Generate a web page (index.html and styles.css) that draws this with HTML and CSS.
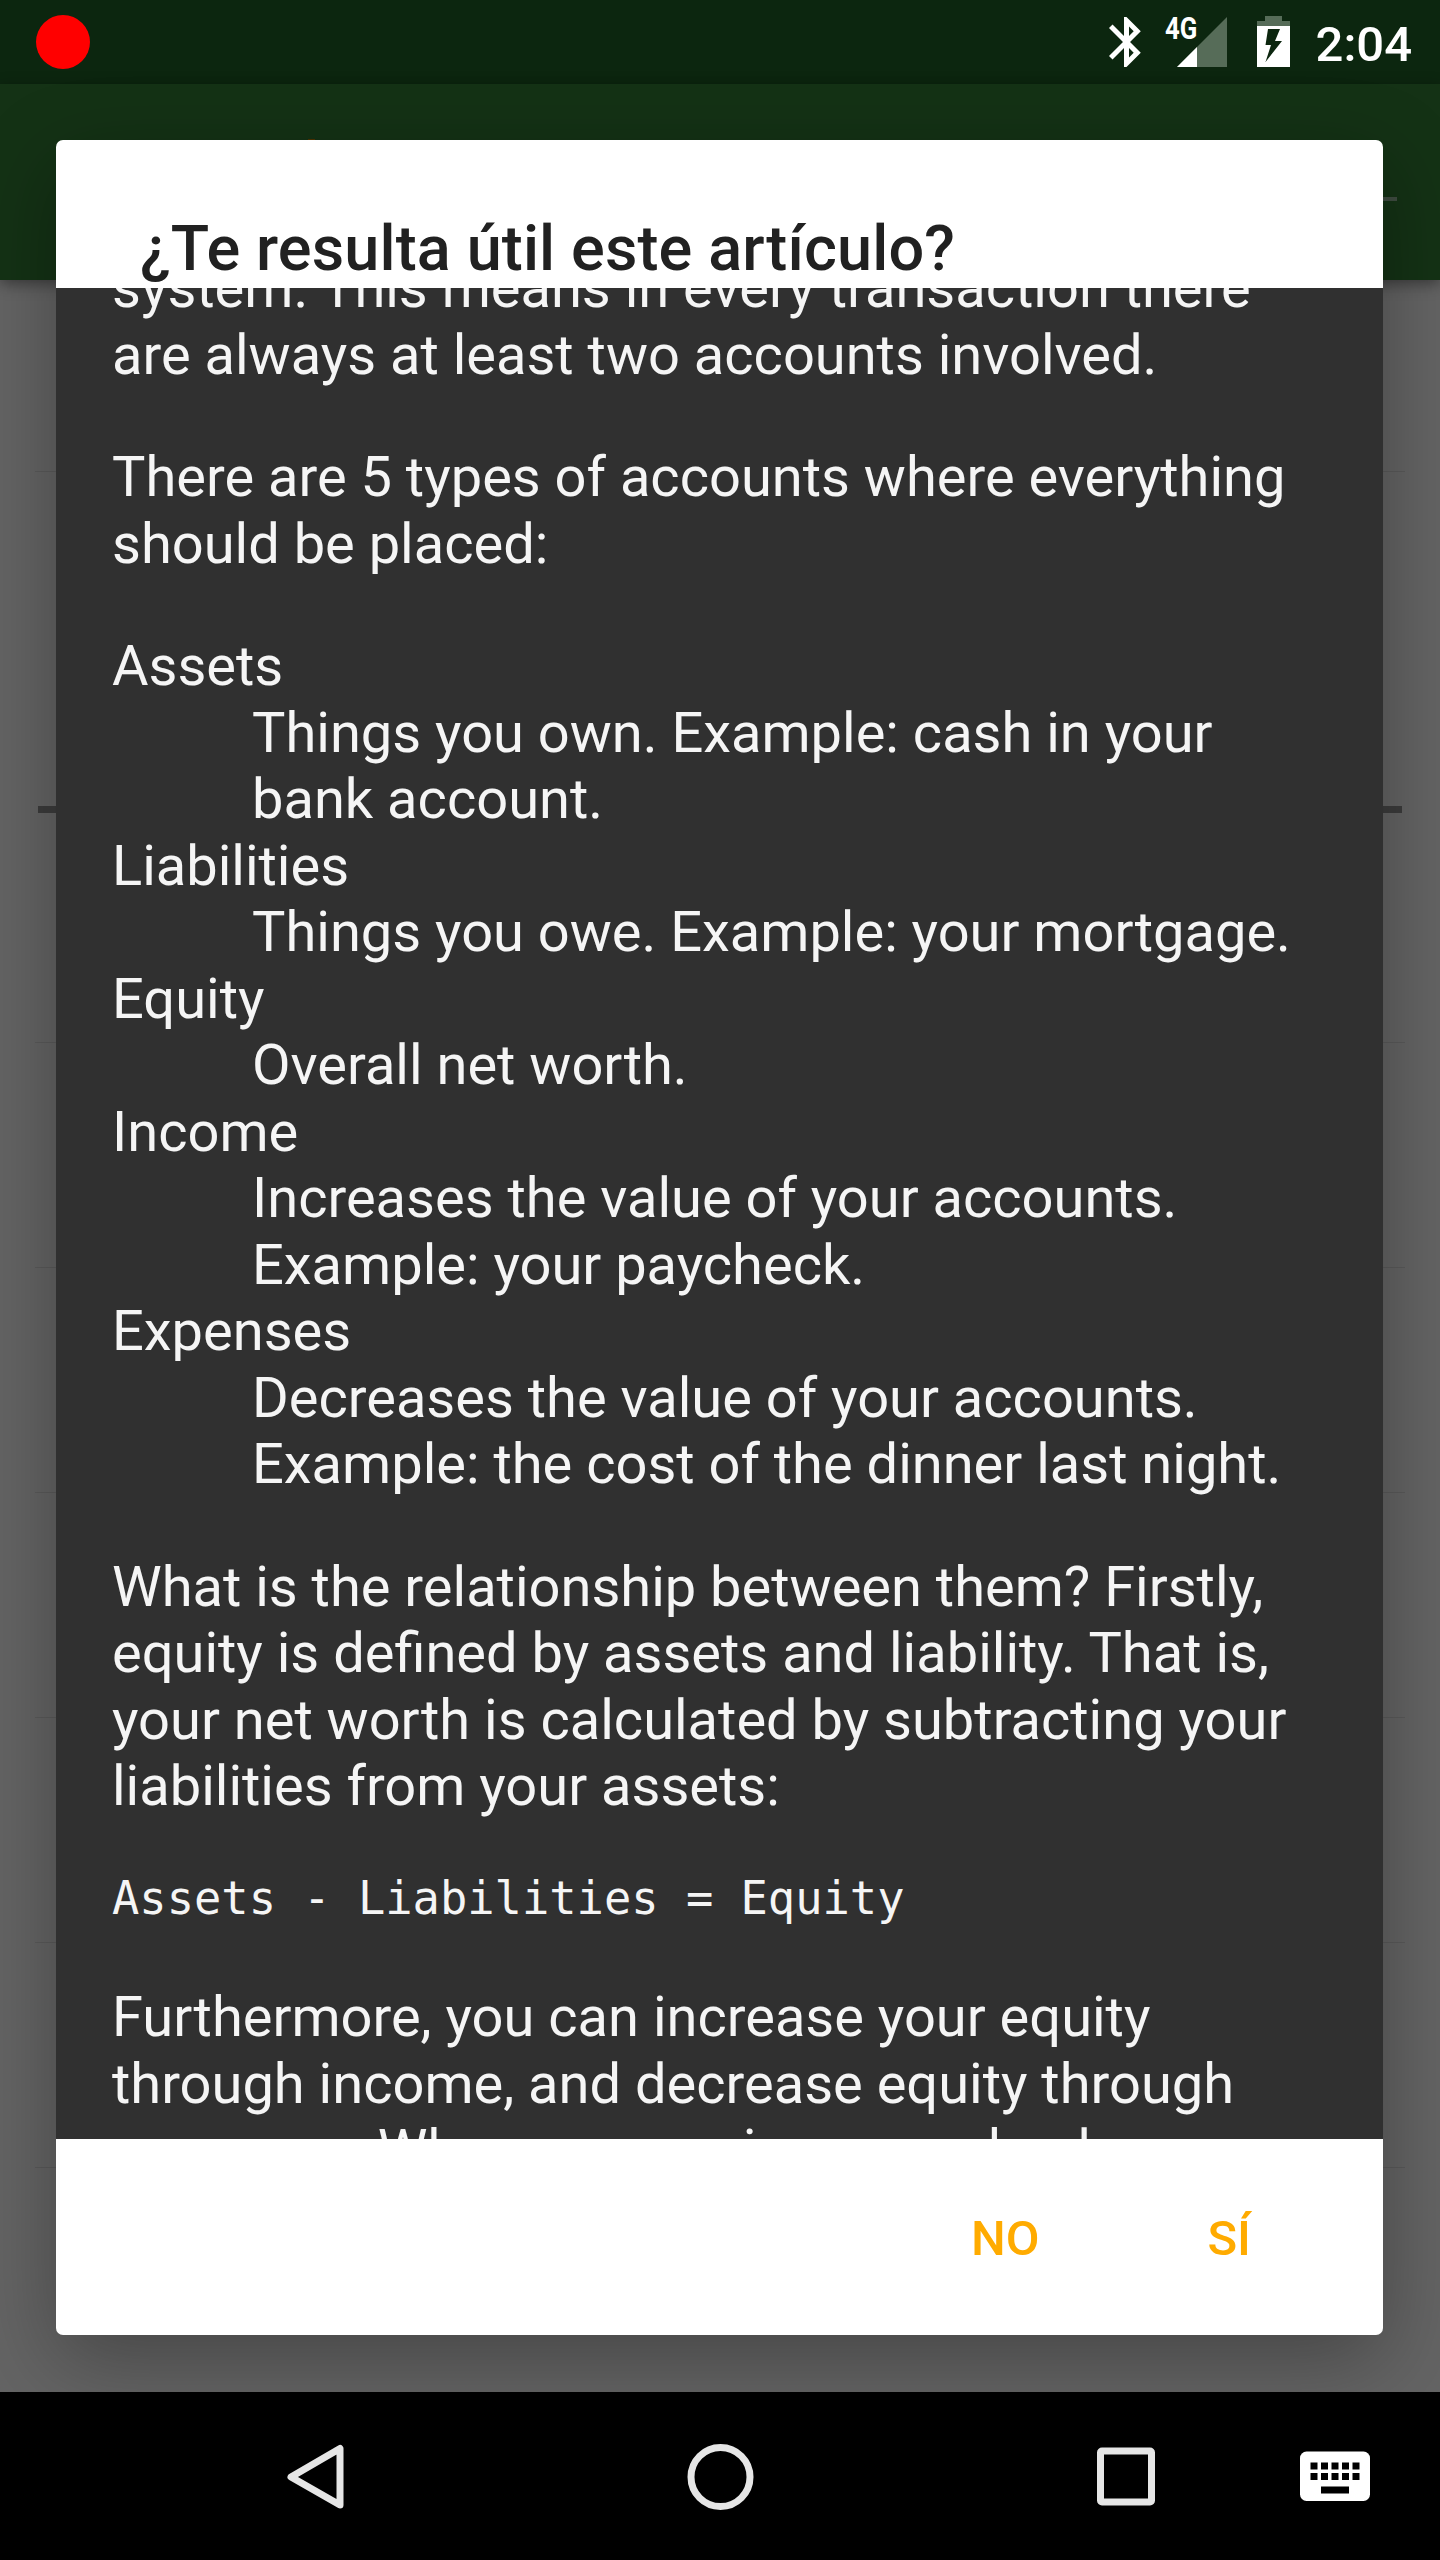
FILE: index.html
```html
<!DOCTYPE html>
<html lang="es">
<head>
<meta charset="utf-8">
<title>Ayuda</title>
<link rel="stylesheet" href="styles.css">
</head>
<body>
<div class="screen">
  <header class="status-bar">
    <span class="record-dot"></span>
    <div class="status-icons">
      <svg class="icon-bluetooth" width="32" height="50" viewBox="5 2 12.8 20"><path d="M17.710 7.710L12 2h-1v7.590L6.410 5 5 6.410 10.590 12 5 17.590 6.410 19 11 14.410V22h1l5.710-5.710-4.300-4.290 4.300-4.290zM13 5.830l1.880 1.880L13 9.590V5.830zm1.880 10.460L13 18.170v-3.760l1.880 1.880z" fill="#fff"/></svg>
      <div class="signal">
        <span class="signal-type">4G</span>
        <svg width="50" height="50" viewBox="0 0 50 50"><path d="M50 0V50H0Z" fill="#566c58"/><path d="M20 30V50H0Z" fill="#fff"/></svg>
      </div>
      <svg class="icon-battery" width="33" height="51" viewBox="0 0 33 51"><path d="M8 0H25V5H33V10H0V5H8Z" fill="#566c58"/><path fill-rule="evenodd" d="M0 10H33V51H0ZM11 13L8.500 29H14L8.500 46L25 25H18L23 13Z" fill="#fff"/></svg>
      <time class="clock">2:04</time>
    </div>
  </header>
  <div class="app-bar"><span class="title-accent"></span><span class="action-line"></span></div>
  <main class="list">
    <div class="row row-first"></div>
    <div class="row row-chart"><span class="chart-rule"></span></div>
    <div class="row"></div>
    <div class="row"></div>
    <div class="row"></div>
    <div class="row"></div>
    <div class="row"></div>
  </main>
  <nav class="nav-bar">
    <svg width="1440" height="168" viewBox="0 0 1440 168">
      <g fill="none" stroke="#e6e6e6" stroke-width="7" stroke-linejoin="round">
        <path d="M340 56.500V113L291 85Z"/>
        <ellipse cx="720.500" cy="85" rx="29.500" ry="29.500"/>
        <rect x="1100.500" y="59" width="51" height="51" rx="1.500"/>
      </g>
      <rect x="1300" y="59.500" width="70" height="49.500" rx="6.500" fill="#fff"/>
      <path d="M1310.500 70.500h7v7h-7zM1321 70.500h7v7h-7zM1331.500 70.500h7v7h-7zM1342 70.500h7v7h-7zM1352.500 70.500h7v7h-7zM1310.500 81h7v7h-7zM1321 81h7v7h-7zM1331.500 81h7v7h-7zM1342 81h7v7h-7zM1352.500 81h7v7h-7zM1321 94.500h28v7h-28z" fill="#000"/>
    </svg>
  </nav>

  <section class="dialog" role="dialog">
    <h1 class="dialog-title">¿Te resulta útil este artículo?</h1>
    <div class="article">
      <div class="article-body">
        <p>system. This means in every transaction there<br>are always at least two accounts involved.</p>
        <p>There are 5 types of accounts where everything<br>should be placed:</p>
        <dl>
          <dt>Assets</dt>
          <dd>Things you own. Example: cash in your<br>bank account.</dd>
          <dt>Liabilities</dt>
          <dd>Things you owe. Example: your mortgage.</dd>
          <dt>Equity</dt>
          <dd>Overall net worth.</dd>
          <dt>Income</dt>
          <dd>Increases the value of your accounts.<br>Example: your paycheck.</dd>
          <dt>Expenses</dt>
          <dd>Decreases the value of your accounts.<br>Example: the cost of the dinner last night.</dd>
        </dl>
        <p>What is the relationship between them? Firstly,<br>equity is defined by assets and liability. That is,<br>your net worth is calculated by subtracting your<br>liabilities from your assets:</p>
        <pre>Assets - Liabilities = Equity</pre>
        <p>Furthermore, you can increase your equity<br>through income, and decrease equity through<br>expenses. When you receive a paycheck</p>
      </div>
    </div>
    <footer class="actions">
      <button class="action">NO</button>
      <button class="action">SÍ</button>
    </footer>
  </section>
</div>
</body>
</html>
```
FILE: styles.css
```css
* { box-sizing: border-box; }
body { margin: 0; font-family: Roboto, "Noto Sans", sans-serif; }
svg { display: block; }

.screen {
  position: relative;
  display: flex;
  flex-direction: column;
  width: 1440px;
  height: 2560px;
  overflow: hidden;
  background: #646464;
}

.status-bar {
  display: flex;
  justify-content: space-between;
  height: 84px;
  padding: 15px 28px 0 36px;
  background: #0c260f;
}
.record-dot { width: 54px; height: 54px; border-radius: 50%; background: #f00; }
.status-icons { display: flex; align-items: flex-start; }
.icon-bluetooth { margin: 2px 24px 0 0; }
.signal { position: relative; padding: 2px 0 0 12px; margin-right: 30px; }
.signal-type {
  position: absolute;
  left: 0;
  top: -1px;
  font-size: 31px;
  line-height: 30px;
  font-weight: 700;
  color: #fff;
  transform: scaleX(.83);
  transform-origin: 0 0;
}
.icon-battery { margin: 1px 26px 0 0; }
.clock { font-size: 49px; line-height: 59px; font-weight: 500; color: #fff; }

.app-bar {
  position: relative;
  z-index: 1;
  display: flex;
  align-items: flex-start;
  justify-content: space-between;
  height: 196px;
  padding: 55px 43px 0 308px;
  background: #143215;
  box-shadow: 0 4px 14px rgba(0, 0, 0, .42);
}
.title-accent { width: 7px; height: 2px; background: #4f3300; }
.action-line { width: 60px; height: 4px; margin-top: 58px; background: #3f4c41; }

.list { flex: 1; padding: 0 35px; }
.row { height: 225px; border-bottom: 1px solid #5a5a5a; }
.row-first { height: 192px; }
.row-chart { display: flex; height: 571px; padding: 334px 3px 0; }
.chart-rule { flex: 1; height: 7px; background: #3c3c3c; }

.nav-bar { position: relative; z-index: 3; height: 168px; background: #000; }

.dialog {
  position: absolute;
  z-index: 2;
  left: 56px;
  top: 140px;
  display: flex;
  flex-direction: column;
  width: 1327px;
  height: 2195px;
  border-radius: 7px;
  background: #fff;
  box-shadow: 0 24px 84px rgba(0, 0, 0, .31);
}
.dialog-title {
  height: 148px;
  margin: 0;
  padding: 72px 84px 0;
  font-size: 63px;
  line-height: 74px;
  font-weight: 500;
  letter-spacing: .13px;
  color: #212121;
}
.article { height: 1851px; overflow: hidden; background: #303030; }
.article-body {
  margin-top: -33px;
  padding: 0 56px;
  font-size: 56px;
  line-height: 66.5px;
  color: #f5f5f5;
  white-space: nowrap;
}
.article-body p, .article-body dl, .article-body pre { margin: 0 0 56px; }
.article-body dd { margin: 0 0 0 140px; }
.article-body pre {
  margin-bottom: 62px;
  font: 45.4px/46.5px "DejaVu Sans Mono", monospace;
}
.actions {
  display: flex;
  flex: 1;
  align-items: flex-start;
  justify-content: flex-end;
  padding: 71px 132px 0 0;
  gap: 168px;
}
.action {
  padding: 0;
  border: 0;
  background: none;
  font: 500 49px/58px Roboto, sans-serif;
  color: #ffab00;
}
```
